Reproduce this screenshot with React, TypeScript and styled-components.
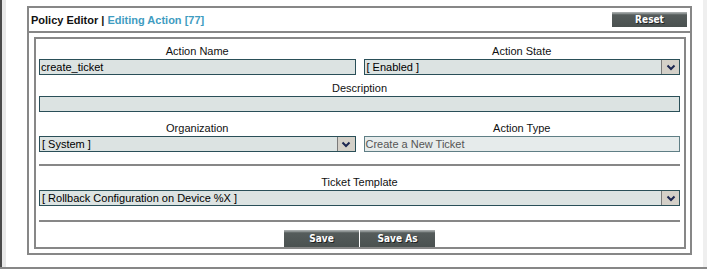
import React from "react";
import { createGlobalStyle, styled } from "styled-components";

const GlobalStyle = createGlobalStyle`
  body {
    margin: 0;
    background: #ffffff;
    font-family: "Liberation Sans", Arial, sans-serif;
  }
`;

const Page = styled.div`
  display: flex;
  width: 707px;
  height: 269px;
  box-sizing: border-box;
  border-bottom: 2px solid #878787;
`;

const LeftRail = styled.div`
  width: 6px;
  box-sizing: border-box;
  border-left: 2px solid #4a4a4a;
  background: #e8e8e8;
`;

const RightRail = styled.div`
  width: 4px;
  background: #efefef;
`;

const Main = styled.div`
  flex: 1;
  padding: 6px 11px 0 21px;
`;

const Panel = styled.div`
  border: 2px solid #878787;
`;

const Header = styled.div`
  height: 23px;
  display: flex;
  align-items: center;
  justify-content: space-between;
  padding: 0 3px 0 2px;
  border-bottom: 2px solid #878787;
`;

const Title = styled.div`
  font-size: 11px;
  font-weight: bold;
  color: #111;
`;

const Accent = styled.span`
  color: #3f9cc1;
`;

const InnerBox = styled.div`
  margin: 4px 4px 4px 5px;
  border: 2px solid #878787;
  padding: 5px 4px 0 3px;
`;

const Row = styled.div<{ $top?: number; $cols?: number }>`
  display: grid;
  grid-template-columns: ${({ $cols = 1 }) => `repeat(${$cols}, 1fr)`};
  column-gap: 8px;
  margin-top: ${({ $top = 0 }) => $top}px;
`;

const Field = styled.div`
  display: flex;
  flex-direction: column;
  align-items: center;
  min-width: 0;
`;

const Label = styled.div`
  font-size: 11px;
  line-height: 15px;
  color: #111;
`;

const TextBox = styled.div<{ $readOnly?: boolean }>`
  width: 100%;
  height: 16px;
  box-sizing: border-box;
  border: 1px solid ${({ $readOnly }) => ($readOnly ? "#5f7e85" : "#2a4f58")};
  background: ${({ $readOnly }) => ($readOnly ? "#e6ebeb" : "#dce3e2")};
  color: ${({ $readOnly }) => ($readOnly ? "#555" : "#000")};
  font-size: 11px;
  line-height: 14px;
  padding-left: 1px;
  white-space: nowrap;
  overflow: hidden;
`;

const SelectBox = styled.div`
  width: 100%;
  height: 16px;
  box-sizing: border-box;
  border: 1px solid #2a4f58;
  background: #dce3e2;
  display: flex;
  font-size: 11px;
  line-height: 14px;
  color: #000;
`;

const SelectValue = styled.div`
  flex: 1;
  padding-left: 2px;
  white-space: nowrap;
  overflow: hidden;
`;

const Arrow = styled.div`
  width: 18px;
  box-sizing: border-box;
  background: #d4d0c8;
  border-left: 1px solid #7a7a7a;
  display: flex;
  align-items: center;
  justify-content: center;
`;

const Divider = styled.div<{ $top: number }>`
  height: 2px;
  background: #878787;
  margin-top: ${({ $top }) => $top}px;
`;

const Buttons = styled.div`
  display: flex;
  justify-content: center;
  gap: 1px;
  margin-top: 8px;
`;

const Button = styled.button<{ $h?: number }>`
  width: 75px;
  height: ${({ $h = 17 }) => $h}px;
  border: none;
  padding: 0;
  background: linear-gradient(
    #a3a8a8 0,
    #a3a8a8 1px,
    #737a79 2px,
    #555c5b 3px,
    #4a5150 100%
  );
  color: #fff;
  font-family: "DejaVu Sans Condensed", "DejaVu Sans", sans-serif;
  font-weight: bold;
  font-size: 10px;
  text-shadow: 1px 1px 0 #1e2222;
`;

const Chevron = () => (
  <svg width="10" height="7" viewBox="0 0 10 7">
    <polyline
      points="1.5,1.5 5,5 8.5,1.5"
      fill="none"
      stroke="#1c2650"
      strokeWidth="2"
    />
  </svg>
);

const Select = ({ value }: { value: string }) => (
  <SelectBox>
    <SelectValue>{value}</SelectValue>
    <Arrow>
      <Chevron />
    </Arrow>
  </SelectBox>
);

const App = (): JSX.Element => {
  return (
    <>
      <GlobalStyle />
      <Page>
        <LeftRail />
        <Main>
          <Panel>
            <Header>
              <Title>
                Policy Editor | <Accent>Editing Action [77]</Accent>
              </Title>
              <Button $h={15}>Reset</Button>
            </Header>
            <InnerBox>
              <Row $cols={2}>
                <Field>
                  <Label>Action Name</Label>
                  <TextBox>create_ticket</TextBox>
                </Field>
                <Field>
                  <Label>Action State</Label>
                  <Select value="[ Enabled ]" />
                </Field>
              </Row>
              <Row $top={6}>
                <Field>
                  <Label>Description</Label>
                  <TextBox />
                </Field>
              </Row>
              <Row $cols={2} $top={9}>
                <Field>
                  <Label>Organization</Label>
                  <Select value="[ System ]" />
                </Field>
                <Field>
                  <Label>Action Type</Label>
                  <TextBox $readOnly>Create a New Ticket</TextBox>
                </Field>
              </Row>
              <Divider $top={12} />
              <Row $top={9}>
                <Field>
                  <Label>Ticket Template</Label>
                  <Select value="[ Rollback Configuration on Device %X ]" />
                </Field>
              </Row>
              <Divider $top={14} />
              <Buttons>
                <Button>Save</Button>
                <Button>Save As</Button>
              </Buttons>
            </InnerBox>
          </Panel>
        </Main>
        <RightRail />
      </Page>
    </>
  );
};

export default App;
